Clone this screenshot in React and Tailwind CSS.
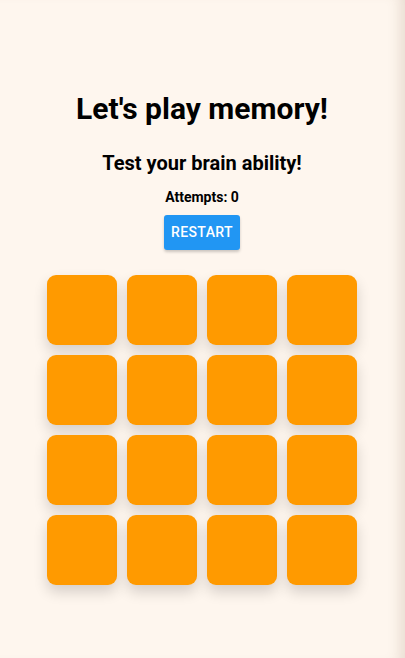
import { useState } from 'react';

export default function App() {
  const [attempts, setAttempts] = useState(0);
  const cards = Array.from({ length: 16 }, (_, i) => i);

  return (
    <div
      className="min-h-screen bg-[#fef6ee] pr-[1px] flex flex-col items-center shadow-[inset_-14px_0_14px_-10px_rgba(120,90,60,0.18)]"
      style={{ fontFamily: 'Roboto, "Liberation Sans", sans-serif' }}
    >
      {/* Header */}
      <h1 className="mt-[89px] text-[30px] leading-[40px] font-bold text-black">Let's play memory!</h1>
      <h2 className="mt-[20px] text-[20px] leading-[28px] font-bold text-black">Test your brain ability!</h2>
      <p className="mt-[10px] text-[14px] leading-[20px] font-bold text-black">Attempts: {attempts}</p>

      <button
        onClick={() => setAttempts(0)}
        className="mt-[8px] h-[35px] w-[76px] rounded-[3px] bg-[#2196f3] text-white text-[14px] font-medium tracking-[0.4px] shadow-[0_2px_3px_rgba(0,0,0,0.2)]"
      >
        RESTART
      </button>

      {/* Board */}
      <div className="mt-[25px] grid grid-cols-4 gap-[10px]">
        {cards.map((c) => (
          <div
            key={c}
            onClick={() => setAttempts(attempts + 1)}
            className="w-[70px] h-[70px] rounded-[9px] bg-[#ff9a00] shadow-[0_7px_14px_rgba(0,0,0,0.16)]"
          />
        ))}
      </div>
    </div>
  );
}
